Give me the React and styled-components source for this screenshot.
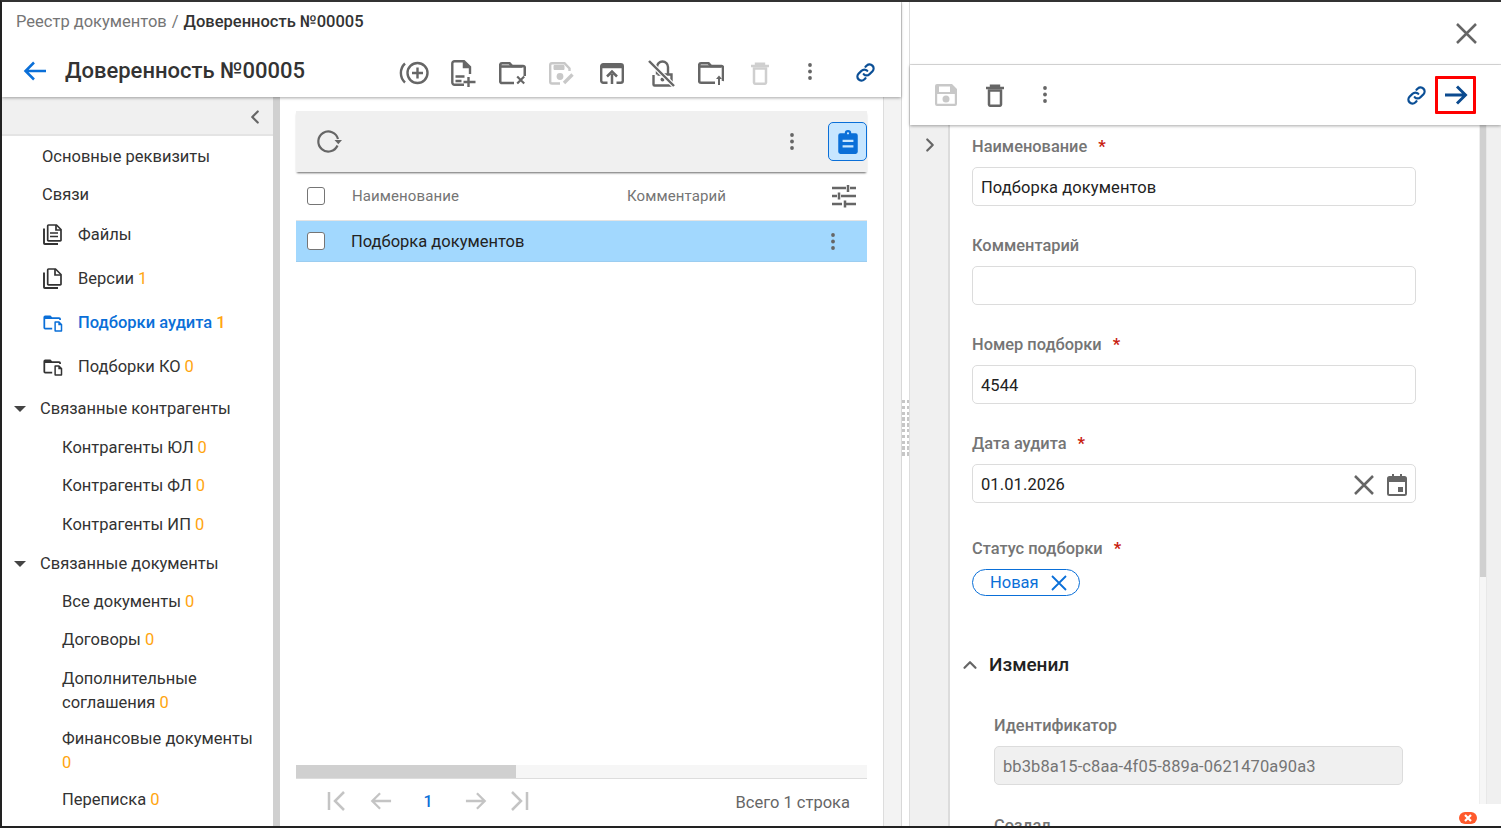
import React from 'react';
import styled, { createGlobalStyle } from 'styled-components';
import { ChevronLeft, ChevronRight, ChevronUp } from 'lucide-react';

const Global = createGlobalStyle`
  html, body { margin: 0; padding: 0; height: 100%; overflow: hidden; background: #fff; }
  * { box-sizing: border-box; }
  body { font-family: Roboto, "Liberation Sans", sans-serif; color: #212121; }
`;

const Frame = styled.div`
  width: 1501px; height: 828px; display: flex; overflow: hidden; position: relative;
  border-top: 2px solid #333; border-left: 2px solid #222; border-bottom: 2px solid #222;
  background: #fff;
`;
const LeftPane = styled.div`
  width: 900px; flex: none; display: flex; flex-direction: column; background: #f3f3f3;
  border-right: 1px solid #d8d8d8; position: relative;
`;
const Header = styled.header`
  height: 95px; flex: none; background: #fff; box-shadow: 0 1px 3px rgba(0,0,0,.35);
  position: relative; z-index: 2; padding: 11px 0 0 14px;
`;
const Crumbs = styled.div`
  font-size: 16.5px; line-height: 18px; color: #757575; display: flex; gap: 5px;
  b { color: #333; font-weight: 500; }
`;
const TitleRow = styled.div`
  display: flex; align-items: center; margin-top: 22px; height: 36px;
`;
const Back = styled.span`
  width: 42px; display: flex; margin-left: 7px; flex: none;
`;
const Title = styled.h1`
  margin: -1px 0 0; font-size: 22px; font-weight: 500; color: #333; line-height: 30px; width: 324px; flex: none;
`;
const IconRow = styled.div`
  display: flex; align-items: center; margin-top: 4px;
`;
const IconSlot = styled.span`
  width: ${p => p.$w || 49.5}px; height: 36px; display: flex; align-items: center; justify-content: center; flex: none;
  color: ${p => p.$c || '#666'}; padding-bottom: ${p => p.$up || 0}px; margin-left: ${p => p.$ml || 0}px;
`;
const Body = styled.div`flex: 1; display: flex; min-height: 0;`;
const Side = styled.aside`
  width: 271px; flex: none; background: #fff; display: flex; flex-direction: column; overflow: hidden;
`;
const SideHead = styled.div`
  height: 39px; flex: none; background: #f0f0f0; border-bottom: 2px solid #e4e4e4;
  display: flex; justify-content: flex-end; align-items: center; padding: 2px 7px 0 0; color: #666;
`;
const NavList = styled.nav`flex: 1; display: flex; flex-direction: column; padding-top: 1px; font-size: 16.5px; color: #333;`;
const Nav = styled.div`
  display: flex; align-items: ${p => p.$tall ? 'flex-start' : 'center'};
  height: ${p => p.$h || 38.5}px; padding-left: ${p => p.$pl || 0}px; padding-top: ${p => p.$tall ? 7 : 0}px;
  line-height: 24px; flex: none;
  color: ${p => p.$active ? '#0a6fd8' : '#333'}; font-weight: ${p => p.$active ? 500 : 400};
  svg { flex: none; }
`;
const NavIcon = styled.span`
  width: 36px; flex: none; display: flex; align-items: center; padding-left: 1px; color: ${p => p.$active ? '#0a6fd8' : '#333'};
`;
const Caret = styled.span`
  width: 0; height: 0; border-left: 6px solid transparent; border-right: 6px solid transparent; border-top: 6px solid #444;
  margin: 0 14px 0 12px; flex: none;
`;
const Count = styled.span`color: #ffa50f; margin-left: ${p => p.$flush ? 0 : 4}px;`;
const Wrapped = styled.div`width: 205px;`;
const SideScroll = styled.div`width: 7px; flex: none; background: #d0d0d0;`;
const Main = styled.main`
  width: 603px; flex: none; background: #fff; padding: 14px 16px 0 16px; display: flex; flex-direction: column;
`;
const Toolbar = styled.div`
  height: 61px; flex: none; background: #f0f0f0; box-shadow: 0 2px 2px -1px rgba(0,0,0,.6);
  display: flex; align-items: center; justify-content: space-between; padding: 0 0 0 19px; position: relative; z-index: 1;
`;
const Tools = styled.div`display: flex; align-items: center; gap: 34px; color: #666;`;
const ToggleBtn = styled.span`
  width: 39px; height: 39px; border: 1px solid #0a6fd8; border-radius: 5px; background: #c7e6ff;
  display: flex; align-items: center; justify-content: center;
`;
const TableHead = styled.div`
  height: 49px; flex: none; display: grid; grid-template-columns: 56px 275px 1fr 35px; align-items: center;
  font-size: 15px; color: #757575; border-bottom: 1px solid #e4e4e4; background: #fff; letter-spacing: .1px;
`;
const Check = styled.span`
  width: 18px; height: 18px; border: 1.5px solid #757575; border-radius: 3px; background: #fff; margin-left: 11px; display: block;
`;
const TableRow = styled.div`
  height: 41px; flex: none; display: grid; grid-template-columns: 55px 1fr 36px; align-items: center;
  background: #a2d8fe; font-size: 16.5px; color: #222; border-bottom: 1px solid #9ccdf0;
`;
const Spacer = styled.div`flex: 1;`;
const HScroll = styled.div`
  height: 14px; flex: none; background: #f6f6f6; border-bottom: 1px solid #ddd;
  &::before { content: ''; display: block; height: 13px; width: 220px; background: #d0d0d0; }
`;
const Pager = styled.div`
  height: 47px; flex: none; display: flex; align-items: center; padding: 0 0 3px 30px; font-size: 16.5px;
`;
const PageNum = styled.span`color: #0a6fd8; font-size: 16px; font-weight: 500; width: 32px; text-align: center; margin: 0 7px 0 -1px;`;
const PageEnd = styled.span`display: flex; margin-left: ${p => p.$ml || 0}px;`;
const Total = styled.span`margin-left: auto; color: #666; padding: 2px 17px 0 0;`;
const Gutter = styled.div`flex: 1; background: #f3f3f3; border-left: 1px solid #ddd;`;
const Splitter = styled.div`
  width: 8px; flex: none; background: #fff; position: relative; border-right: 1px solid #ddd;
`;
const Grip = styled.div`
  position: absolute; left: 0; top: 398px; width: 7px; height: 56px;
  background: repeating-linear-gradient(to bottom, #c6c6c6 0 3.5px, transparent 3.5px 5.8px);
  &::after { content: ''; position: absolute; left: 3px; top: 0; width: 1.500px; height: 100%; background: #fff; }
`;
const RightPane = styled.div`flex: 1; min-width: 0; display: flex; flex-direction: column; background: #f0f0f0; position: relative;`;
const CloseBar = styled.div`
  height: 63px; flex: none; background: #fff; border-bottom: 1px solid #dedede; display: flex; justify-content: flex-end; align-items: center; padding: 0 24px 0 0; color: #666;
`;
const ActionBar = styled.div`
  height: 60px; flex: none; background: #fff; box-shadow: 0 1px 3px rgba(0,0,0,.35); position: relative; z-index: 2;
  display: flex; align-items: center; padding: 0 25px 0 11px;
`;
const ActionLeft = styled.div`display: flex; align-items: center; flex: 1;`;
const RedBox = styled.span`
  width: 41px; height: 38px; border: 3px solid #f00; border-radius: 1px; display: flex; align-items: center; justify-content: center; margin: 0 0 1px 8px;
`;
const Detail = styled.div`flex: 1; display: flex; min-height: 0;`;
const Rail = styled.div`
  width: 40px; flex: none; background: #f0f0f0; border-right: 2px solid #dcdcdc; padding: 9px 0 0 9px; color: #666;
`;
const Form = styled.div`
  width: 529px; flex: none; background: #fff; padding: 0 0 0 22px; overflow: hidden; position: relative;
`;
const FieldLabel = styled.div`
  font-size: 16.4px; font-weight: 500; color: #757575; line-height: 20px; margin-top: ${p => p.$mt}px;
  span { color: #c8200f; margin-left: 7px; font-weight: 700; }
`;
const Input = styled.div`
  width: ${p => p.$w || 444}px; height: 39px; border: 1px solid #dcdcdc; border-radius: 5px; margin-top: ${p => p.$mt || 10}px; padding: 2px 8px 0;
  display: flex; align-items: center; font-size: 16.5px; letter-spacing: .1px;
  background: ${p => p.$off ? '#f0f0f0' : '#fff'};
  color: ${p => p.$off ? '#757575' : '#222'};
`;
const Fill = styled.span`flex: 1;`;
const ClearSlot = styled.span`display: flex; margin-right: 13px; color: #666;`;
const Chip = styled.span`
  display: inline-flex; align-items: center; height: 27px; width: 108px; border: 1px solid #0a6fd8; border-radius: 14px;
  color: #0a6fd8; font-size: 16.5px; padding-left: 17px; margin-top: 10px; gap: 12px;
`;
const SectionHead = styled.div`
  display: flex; align-items: center; margin: 57px 0 0 -13px; font-size: 19px; font-weight: 500; color: #222; line-height: 24px; gap: 8px;
`;
const Indented = styled.div`padding-left: 22px;`;
const VScroll = styled.div`
  width: 8px; flex: none; background: #f6f6f6; border-left: 1px solid #eee; border-right: 1px solid #e8e8e8;
  &::before { content: ''; display: block; width: 100%; height: 452px; background: #d0d0d0; }
`;
const Toast = styled.div`
  position: absolute; right: 0; bottom: 0; width: 60px; height: 22px; background: #fff; display: flex; justify-content: flex-end; padding: 8px 24px 0 0;
`;

const Svg = ({ w, h, children, fill = 'none', stroke = 'currentColor', sw = 2.4 }) => (
  <svg width={w} height={h} viewBox={`0 0 ${w} ${h}`} fill={fill} stroke={stroke} strokeWidth={sw}>{children}</svg>
);

const AddCircle = () => (
  <Svg w={32} h={24}>
    <circle cx="19.500" cy="12" r="10" />
    <path d="M19.500 6.500v11M14 12h11" />
    <path d="M7 2.500a13 13 0 0 0 0 19" />
  </Svg>
);
const NoteAdd = () => (
  <Svg w={25} h={27}>
    <path d="M19 14V7L13 1.200H3.500A2.200 2.200 0 0 0 1.300 3.400V22.500a2.200 2.200 0 0 0 2.200 2.200H13" />
    <path d="M12.500 1.500V7.500H18.500" fill="currentColor" strokeWidth="1.500" />
    <path d="M4.500 16.500h9M4.500 21h6M17.500 17v10M12.500 22h12" />
  </Svg>
);
const FolderX = () => (
  <Svg w={27} h={23} sw={2.6}>
    <path d="M15 21H3a1.800 1.800 0 0 1-1.800-1.800V3A1.800 1.800 0 0 1 3 1.300h7.500L13 4h11a1.800 1.800 0 0 1 1.800 1.800V14" />
    <path d="M1.500 4.500h22" />
    <path d="M18.200 14.500l7 7M25.200 14.500l-7 7" strokeWidth="2.200" />
  </Svg>
);
const SaveEdit = () => (
  <Svg w={26} h={23} stroke="#c8c8c8" sw={2.4}>
    <path d="M11 21.500H3A1.800 1.800 0 0 1 1.200 19.700V3A1.800 1.800 0 0 1 3 1.200h12.500L20.500 6.500V9" />
    <path d="M5 3.500h10v4H5z" fill="#c8c8c8" strokeWidth="1" />
    <circle cx="11" cy="14.500" r="3.400" fill="#c8c8c8" stroke="none" />
    <path d="M15 21l8.500-8.500" strokeWidth="3.400" />
  </Svg>
);
const FolderOpenUp = () => (
  <Svg w={24} h={21}>
    <path d="M7.500 19.800H3.200A2 2 0 0 1 1.200 17.800V3.200A2 2 0 0 1 3.200 1.200H20.800A2 2 0 0 1 22.800 3.200V17.800A2 2 0 0 1 20.800 19.800H16.500" />
    <path d="M1.500 3.500h21" strokeWidth="3.500" />
    <path d="M12 21V11M7 13.500L12 8.500 17 13.500" strokeWidth="2.500" />
  </Svg>
);
const LockOff = () => (
  <Svg w={27} h={27} sw={2.4}>
    <path d="M5.500 15v9.500a1 1 0 0 0 1 1h17V14.500H9.500" />
    <path d="M9 14.500V7a5.500 5.500 0 0 1 11 0v7.500" />
    <circle cx="14.500" cy="19.500" r="2" fill="currentColor" stroke="none" />
    <path d="M1 1l25 25" stroke="#fff" strokeWidth="4.500" />
    <path d="M1 1l25 25" />
  </Svg>
);
const FolderUp = () => (
  <Svg w={26} h={23} sw={2.6}>
    <path d="M17 20.800H3a1.800 1.800 0 0 1-1.800-1.800V3A1.800 1.800 0 0 1 3 1.300h7.500L13 4h10.500A1.800 1.800 0 0 1 25 5.800V18a2.800 2.800 0 0 1-.1 1" />
    <path d="M1.500 4.500h22" />
    <path d="M21 23v-7" strokeWidth="2" />
    <path d="M21 13.500l-3 3.500h6z" fill="currentColor" stroke="none" />
  </Svg>
);
const Trash = ({ c = 'currentColor' }) => (
  <Svg w={18} h={23} stroke={c}>
    <path d="M0 4h18M5 4V1.800h8V4" />
    <path d="M3 6.500V20.500a1.500 1.500 0 0 0 1.500 1.300h9a1.500 1.500 0 0 0 1.500-1.300V6.500z" strokeWidth="2.500" />
  </Svg>
);
const Dots = ({ c = 'currentColor' }) => (
  <svg width="4" height="17" viewBox="0 0 4 17" fill={c}><circle cx="2" cy="2" r="1.900" /><circle cx="2" cy="8.500" r="1.900" /><circle cx="2" cy="15" r="1.900" /></svg>
);
const LinkI = () => (
  <svg width="21" height="21" viewBox="0 0 24 24" fill="none" stroke="#0b4f96" strokeWidth="2.600" strokeLinecap="round">
    <path d="M10 14a4.500 4.500 0 0 0 6.500 0l3.500-3.500a4.600 4.600 0 0 0-6.500-6.500l-1.500 1.500" />
    <path d="M14 10a4.500 4.500 0 0 0-6.500 0L4 13.500a4.600 4.600 0 0 0 6.500 6.500l1.500-1.500" />
  </svg>
);
const ArrowLeft = ({ c = '#0a6fd8', s = 24 }) => (
  <svg width={s} height={s} viewBox="0 0 24 24" fill="none" stroke={c} strokeWidth="2.500"><path d="M23 12H2.500M11 3.500L2.500 12l8.500 8.500" /></svg>
);
const ArrowRight = ({ c = '#0b4a8f', s = 24, sw = 2.5 }) => (
  <svg width={s} height={s} viewBox="0 0 24 24" fill="none" stroke={c} strokeWidth={sw}><path d="M1 12h20.500M13 3.500l8.500 8.500-8.500 8.500" /></svg>
);
const Cross = ({ s = 19, sw = 2.5, c = 'currentColor' }) => (
  <svg width={s} height={s} viewBox={`0 0 ${s} ${s}`} fill="none" stroke={c} strokeWidth={sw}><path d={`M1 1L${s - 1} ${s - 1}M${s - 1} 1L1 ${s - 1}`} /></svg>
);
const Refresh = () => (
  <svg width="28" height="28" viewBox="0 1.500 28 28" fill="none" stroke="#666" strokeWidth="2.200"><path d="M23 12.500A10 10 0 1 0 22.500 19" /><path d="M19.500 13.500h7.500l-3.700 4.200z" fill="#666" stroke="none" /></svg>
);
const Clipboard = () => (
  <svg width="26" height="26" viewBox="0 0 24 24" fill="#0a6fd8"><path d="M9 4a3 3 0 0 1 6 0h4a2 2 0 0 1 2 2v15a2 2 0 0 1-2 2H5a2 2 0 0 1-2-2V6a2 2 0 0 1 2-2zm3-1a1 1 0 1 0 0 2 1 1 0 0 0 0-2zM7 10v2h10v-2zm0 5v2h10v-2z" fillRule="evenodd" /></svg>
);
const Tune = () => (
  <Svg w={24} h={24} stroke="#666" sw={2.5}>
    <path d="M0 4h14M18 4h6M16 1v7" />
    <path d="M0 12h5M9 12h15M7 8.500v7" />
    <path d="M0 20h10M14 20h10M13 16.500v7" />
  </Svg>
);
const FilesI = () => (
  <Svg w={19} h={21} sw={1.7}>
    <path d="M5.500 1H13.500L18 5.500V16a.8.8 0 0 1-.8.8H5.500a.8.8 0 0 1-.8-.8V1.800A.8.8 0 0 1 5.500 1z" />
    <path d="M13 1v5h5" />
    <path d="M1 4.500V19.200a.8.8 0 0 0 .8.8H15" strokeWidth="1.900" />
    <path d="M7 9h8M7 12.500h8" strokeWidth="1.600" />
  </Svg>
);
const VersionsI = () => (
  <Svg w={19} h={21} sw={1.7}>
    <path d="M5.500 1H12.500L18 6.500V16a.8.8 0 0 1-.8.8H5.500a.8.8 0 0 1-.8-.8V1.800A.8.8 0 0 1 5.500 1z" />
    <path d="M12 1v6h6" />
    <path d="M1 4.500V19.200a.8.8 0 0 0 .8.8H15" strokeWidth="1.900" />
  </Svg>
);
const FolderDoc = () => (
  <svg width="21" height="21" viewBox="0 0 24 24" fill="currentColor"><path d="M2.500 4h6l2 2h8a2 2 0 0 1 2 2v1h-2V8h-16v10h8v2h-8a2 2 0 0 1-2-2V6a2 2 0 0 1 2-2z" /><path d="M14 10.500h4.500L22 14v7.500a1 1 0 0 1-1 1h-7a1 1 0 0 1-1-1v-10a1 1 0 0 1 1-1zm.7 1.700v8.600h5.600v-5.800h-2.800v-2.800z" /></svg>
);
const SaveI = () => (
  <svg width="24" height="24" viewBox="0 0 24 24" fill="#c8c8c8"><path d="M3 1h15l5 5v15a2 2 0 0 1-2 2H3a2 2 0 0 1-2-2V3a2 2 0 0 1 2-2zm2 2.500v5.500h11V3.500zM3.200 11v9.800h17.600V11zM12 12.500a3.500 3.500 0 1 1 0 7 3.500 3.500 0 0 1 0-7z" fillRule="evenodd" /></svg>
);
const CalendarI = () => (
  <svg width="20" height="22" viewBox="0 0 20 22" fill="#666"><path d="M5 0h2v2h6V0h2v2h2.500A2.500 2.500 0 0 1 20 4.500V19.500A2.500 2.500 0 0 1 17.500 22h-15A2.500 2.500 0 0 1 0 19.500V4.500A2.500 2.500 0 0 1 2.500 2H5zM2 8v11.500a.5.500 0 0 0 .5.500h15a.5.500 0 0 0 .5-.5V8zm9 5h5v5h-5z" fillRule="evenodd" /></svg>
);
const PageFirst = () => (
  <svg width="22" height="22" viewBox="0 0 22 22" fill="none" stroke="#c4c4c4" strokeWidth="2.500"><path d="M3 2v18M18 2L9 11l9 9" /></svg>
);
const PageLast = () => (
  <svg width="22" height="22" viewBox="0 0 22 22" fill="none" stroke="#c4c4c4" strokeWidth="2.500"><path d="M19 2v18M4 2l9 9-9 9" /></svg>
);

export default function App() {
  return (
    <Frame>
      <Global />
      <LeftPane>
        <Header>
          <Crumbs>Реестр документов <span>/</span> <b>Доверенность №00005</b></Crumbs>
          <TitleRow>
            <Back><ArrowLeft /></Back>
            <Title>Доверенность №00005</Title>
            <IconRow>
              <IconSlot><AddCircle /></IconSlot>
              <IconSlot><NoteAdd /></IconSlot>
              <IconSlot><FolderX /></IconSlot>
              <IconSlot><SaveEdit /></IconSlot>
              <IconSlot><FolderOpenUp /></IconSlot>
              <IconSlot><LockOff /></IconSlot>
              <IconSlot><FolderUp /></IconSlot>
              <IconSlot><Trash c="#cfcfcf" /></IconSlot>
              <IconSlot $up={3}><Dots /></IconSlot>
              <IconSlot $up={2} $ml={6}><LinkI /></IconSlot>
            </IconRow>
          </TitleRow>
        </Header>
        <Body>
          <Side>
            <SideHead><ChevronLeft size={22} strokeWidth={2.4} /></SideHead>
            <NavList>
              <Nav $pl={40} $h={39.5}>Основные реквизиты</Nav>
              <Nav $pl={40} $h={36}>Связи</Nav>
              <Nav $pl={40} $h={44}><NavIcon><FilesI /></NavIcon>Файлы</Nav>
              <Nav $pl={40} $h={44}><NavIcon><VersionsI /></NavIcon>Версии<Count>1</Count></Nav>
              <Nav $pl={40} $h={44} $active><NavIcon $active><FolderDoc /></NavIcon>Подборки аудита<Count>1</Count></Nav>
              <Nav $pl={40} $h={44}><NavIcon><FolderDoc /></NavIcon>Подборки КО<Count>0</Count></Nav>
              <Nav $h={40}><Caret />Связанные контрагенты</Nav>
              <Nav $pl={60}>Контрагенты ЮЛ<Count>0</Count></Nav>
              <Nav $pl={60}>Контрагенты ФЛ<Count>0</Count></Nav>
              <Nav $pl={60}>Контрагенты ИП<Count>0</Count></Nav>
              <Nav $h={39}><Caret />Связанные документы</Nav>
              <Nav $pl={60} $h={38}>Все документы<Count>0</Count></Nav>
              <Nav $pl={60}>Договоры<Count>0</Count></Nav>
              <Nav $pl={60} $h={60} $tall><Wrapped>Дополнительные соглашения<Count>0</Count></Wrapped></Nav>
              <Nav $pl={60} $h={61.5} $tall><Wrapped>Финансовые документы<br /><Count $flush>0</Count></Wrapped></Nav>
              <Nav $pl={60}>Переписка<Count>0</Count></Nav>
            </NavList>
          </Side>
          <SideScroll />
          <Main>
            <Toolbar>
              <Refresh />
              <Tools><Dots /><ToggleBtn><Clipboard /></ToggleBtn></Tools>
            </Toolbar>
            <TableHead>
              <Check />
              <span>Наименование</span>
              <span>Комментарий</span>
              <Tune />
            </TableHead>
            <TableRow>
              <Check />
              <span>Подборка документов</span>
              <Dots c="#666" />
            </TableRow>
            <Spacer />
            <HScroll />
            <Pager>
              <PageEnd><PageFirst /></PageEnd>
              <IconSlot $w={65}><ArrowLeft c="#c4c4c4" s={22} /></IconSlot>
              <PageNum>1</PageNum>
              <IconSlot $w={50}><ArrowRight c="#c4c4c4" s={22} /></IconSlot>
              <PageEnd $ml={7}><PageLast /></PageEnd>
              <Total>Всего 1 строка</Total>
            </Pager>
          </Main>
          <Gutter />
        </Body>
      </LeftPane>
      <Splitter><Grip /></Splitter>
      <RightPane>
        <CloseBar><Cross s={21} /></CloseBar>
        <ActionBar>
          <ActionLeft>
            <IconSlot><SaveI /></IconSlot>
            <IconSlot><Trash c="#666" /></IconSlot>
            <IconSlot $up={2}><Dots c="#666" /></IconSlot>
          </ActionLeft>
          <LinkI />
          <RedBox><ArrowRight sw={2.9} /></RedBox>
        </ActionBar>
        <Detail>
          <Rail><ChevronRight size={22} strokeWidth={2.4} /></Rail>
          <Form>
            <FieldLabel $mt={12}>Наименование <span>*</span></FieldLabel>
            <Input>Подборка документов</Input>
            <FieldLabel $mt={30}>Комментарий</FieldLabel>
            <Input />
            <FieldLabel $mt={30}>Номер подборки <span>*</span></FieldLabel>
            <Input>4544</Input>
            <FieldLabel $mt={30}>Дата аудита <span>*</span></FieldLabel>
            <Input>01.01.2026<Fill /><ClearSlot><Cross s={20} /></ClearSlot><CalendarI /></Input>
            <FieldLabel $mt={36}>Статус подборки <span>*</span></FieldLabel>
            <Chip>Новая<Cross s={16} sw={1.8} /></Chip>
            <SectionHead><ChevronUp size={22} strokeWidth={2.4} color="#666" />Изменил</SectionHead>
            <Indented>
              <FieldLabel $mt={39}>Идентификатор</FieldLabel>
              <Input $w={409} $off>bb3b8a15-c8aa-4f05-889a-0621470a90a3</Input>
              <FieldLabel $mt={31}>Создал</FieldLabel>
            </Indented>
          </Form>
          <VScroll />
        </Detail>
        <Toast>
          <svg width="18" height="12" viewBox="0 0 18 12"><rect width="18" height="12" rx="6" fill="#ff5a2c" /><path d="M6 3l6 6M12 3l-6 6" stroke="#fff" strokeWidth="2.200" /></svg>
        </Toast>
      </RightPane>
    </Frame>
  );
}
